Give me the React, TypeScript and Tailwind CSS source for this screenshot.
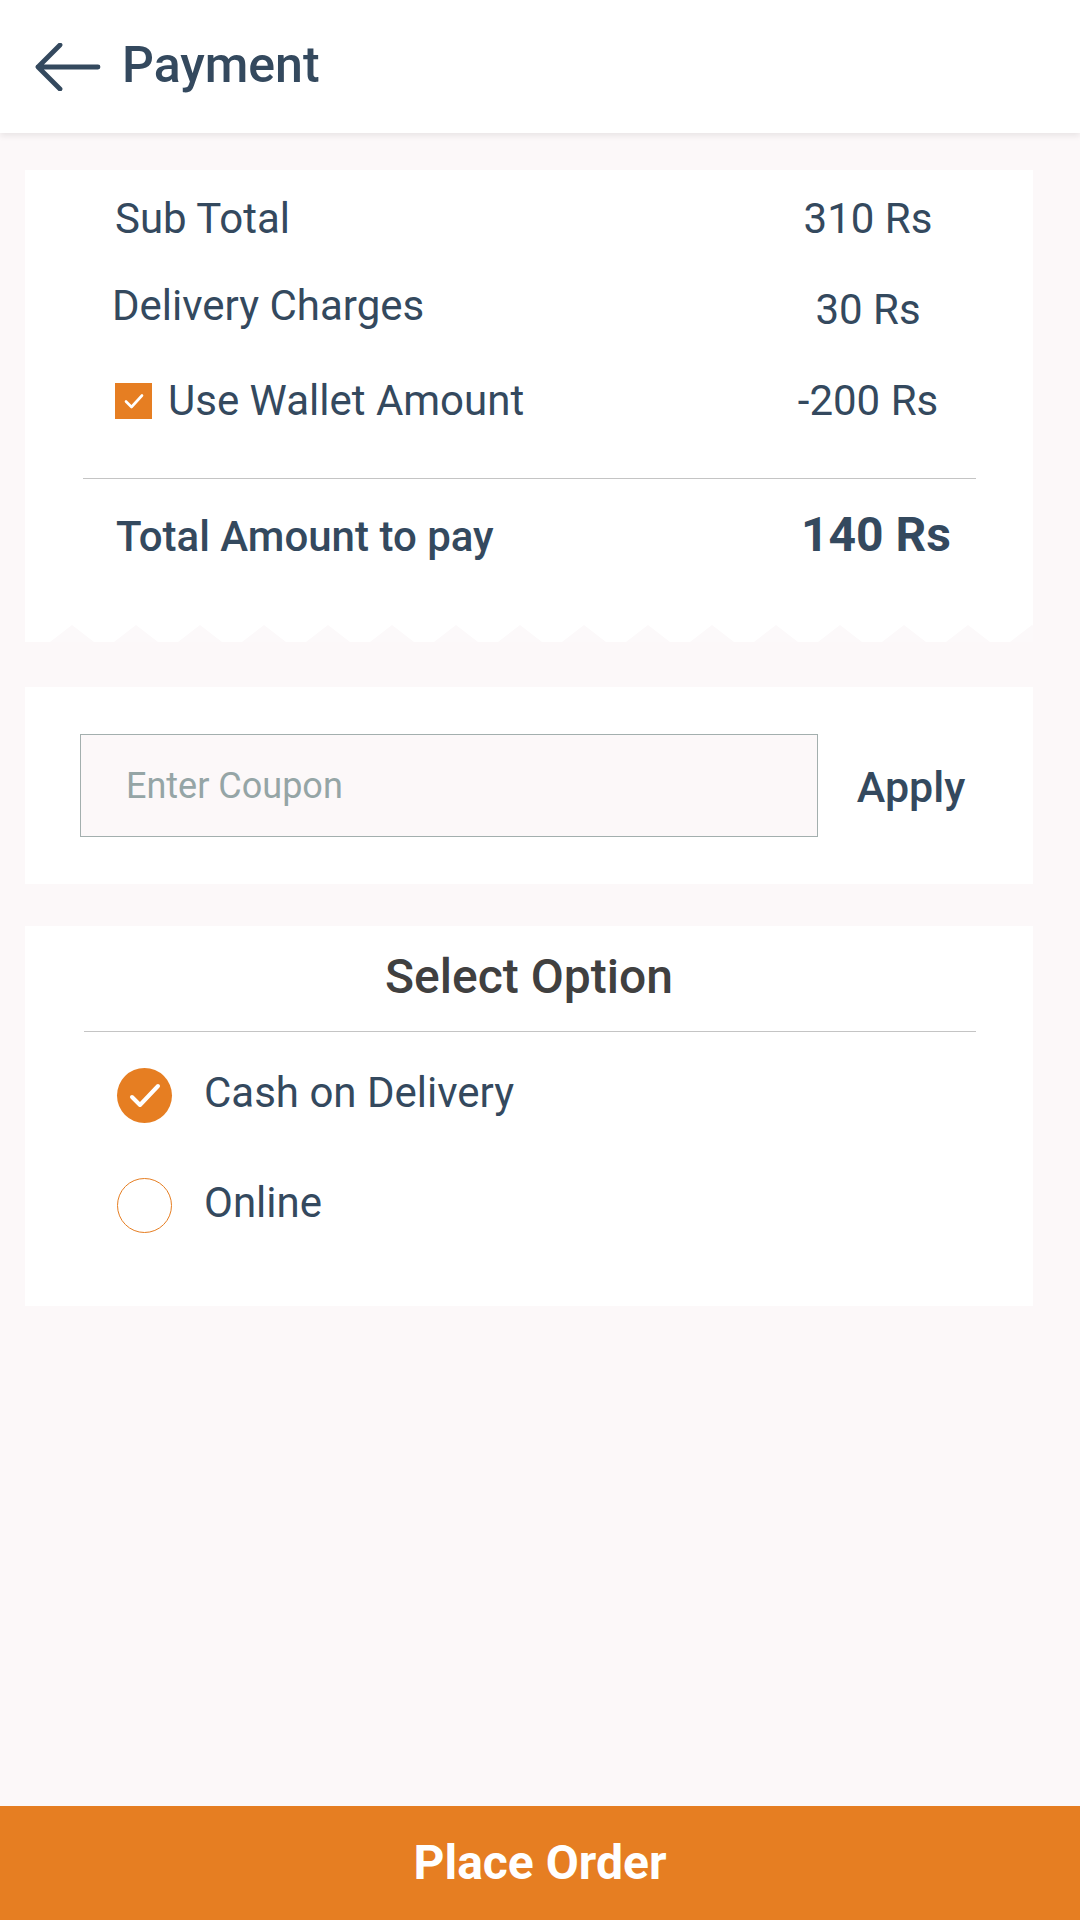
import React from 'react';

const ROWS = [
  { label: 'Sub Total', value: '310 Rs', mt: 'mt-0', labelShift: '', valueShift: '' },
  { label: 'Delivery Charges', value: '30 Rs', mt: 'mt-[37px]', labelShift: '-ml-[3px]', valueShift: 'pt-[4px]' },
];

const Teeth: React.FC = () => {
  const peaks = Array.from({ length: 16 }, (_, i) => 47 + i * 64);
  const points = ['0,17'];
  peaks.forEach((x) => {
    points.push(`${x - 22},17`, `${x},0`, `${x + 22},17`);
  });
  points.push('1008,17');
  return (
    <svg className="absolute bottom-0 left-0" width="1008" height="17" viewBox="0 0 1008 17">
      <polygon points={points.join(' ')} fill="#fcf9fa" />
    </svg>
  );
};

const App: React.FC = () => {
  return (
    <div className="flex flex-col min-h-screen bg-[#fcf8f9] text-[#34495e] font-['Roboto',sans-serif]">
      {/* header */}
      <div className="h-[133px] bg-white flex items-center shadow-[0_3px_6px_rgba(0,0,0,0.08)] relative z-10">
        <svg className="ml-[35px]" width="66" height="48" viewBox="0 0 66 48" fill="none">
          <path d="M63 24H3M25 2L3 24L25 46" stroke="#34495e" strokeWidth="4.8" strokeLinecap="round" strokeLinejoin="round" />
        </svg>
        <h1 className="ml-[21px] text-[50px] leading-[60px] font-medium pb-[4px]">Payment</h1>
      </div>

      {/* price summary */}
      <div className="mt-[37px] mx-[25px] w-[1008px] bg-white relative pt-[24px] pb-[75px]">
        <div className="pl-[90px] pr-[80px]">
          {ROWS.map((row) => (
            <div key={row.label} className={`grid grid-cols-[1fr_170px] ${row.mt}`}>
              <span className={`text-[42px] leading-[50px] ${row.labelShift}`}>{row.label}</span>
              <span className={`text-[42px] leading-[50px] text-center ${row.valueShift}`}>{row.value}</span>
            </div>
          ))}
          <div className="grid grid-cols-[1fr_170px] mt-[41px]">
            <div className="flex items-center gap-4">
              <span className="w-[37px] h-[36px] bg-[#e67e22] flex items-center justify-center">
                <svg width="22" height="18" viewBox="0 0 22 18" fill="none">
                  <path d="M3 9.5L8.5 15L19 3.5" stroke="white" strokeWidth="2.6" strokeLinecap="round" strokeLinejoin="round" />
                </svg>
              </span>
              <span className="text-[42px] leading-[50px]">Use Wallet Amount</span>
            </div>
            <span className="text-[42px] leading-[50px] text-center">-200 Rs</span>
          </div>
        </div>
        <div className="ml-[58px] mr-[57px] mt-[52px] h-px bg-[#c4c4c4]" />
        <div className="pl-[91px] pr-[80px] mt-[26px] grid grid-cols-[1fr_170px] items-baseline">
          <span className="text-[42px] leading-[60px] font-medium">Total Amount to pay</span>
          <span className="text-[48px] leading-[60px] font-bold text-center pl-[16px]">140 Rs</span>
        </div>
        <Teeth />
      </div>

      {/* coupon */}
      <div className="mt-[45px] mx-[25px] w-[1008px] h-[197px] bg-white flex items-center pl-[55px]">
        <div className="w-[738px] h-[103px] border border-[#a3afae] bg-[#fcf8f9] flex items-center pl-[45px]">
          <span className="text-[36px] text-[#95a5a6]">Enter Coupon</span>
        </div>
        <button className="w-[186px] text-center text-[43px] font-medium leading-[50px] pt-[2px]">Apply</button>
      </div>

      {/* payment option */}
      <div className="mt-[42px] mx-[25px] w-[1008px] bg-white pt-[23px] pb-[73px]">
        <h2 className="text-center text-[48px] leading-[56px] font-medium text-[#404040]">Select Option</h2>
        <div className="ml-[59px] mr-[57px] mt-[26px] h-px bg-[#c4c4c4]" />
        <div className="pl-[92px] mt-[36px] flex flex-col gap-[55px]">
          <div className="flex items-center gap-[32px]">
            <span className="w-[55px] h-[55px] rounded-full bg-[#e67e22] flex items-center justify-center">
              <svg width="36" height="30" viewBox="0 0 36 30" fill="none">
                <path d="M5 16L13 24L31 5" stroke="white" strokeWidth="4" strokeLinecap="round" strokeLinejoin="round" />
              </svg>
            </span>
            <span className="text-[42px] leading-[50px] pb-[5px]">Cash on Delivery</span>
          </div>
          <div className="flex items-center gap-[32px]">
            <span className="w-[55px] h-[55px] rounded-full border border-[#e67e22]" />
            <span className="text-[42px] leading-[50px] pb-[5px]">Online</span>
          </div>
        </div>
      </div>

      <div className="flex-1" />

      <button className="h-[114px] w-full bg-[#e67e22] text-white text-[48px] font-bold leading-[60px]">
        Place Order
      </button>
    </div>
  );
};

export default App;
